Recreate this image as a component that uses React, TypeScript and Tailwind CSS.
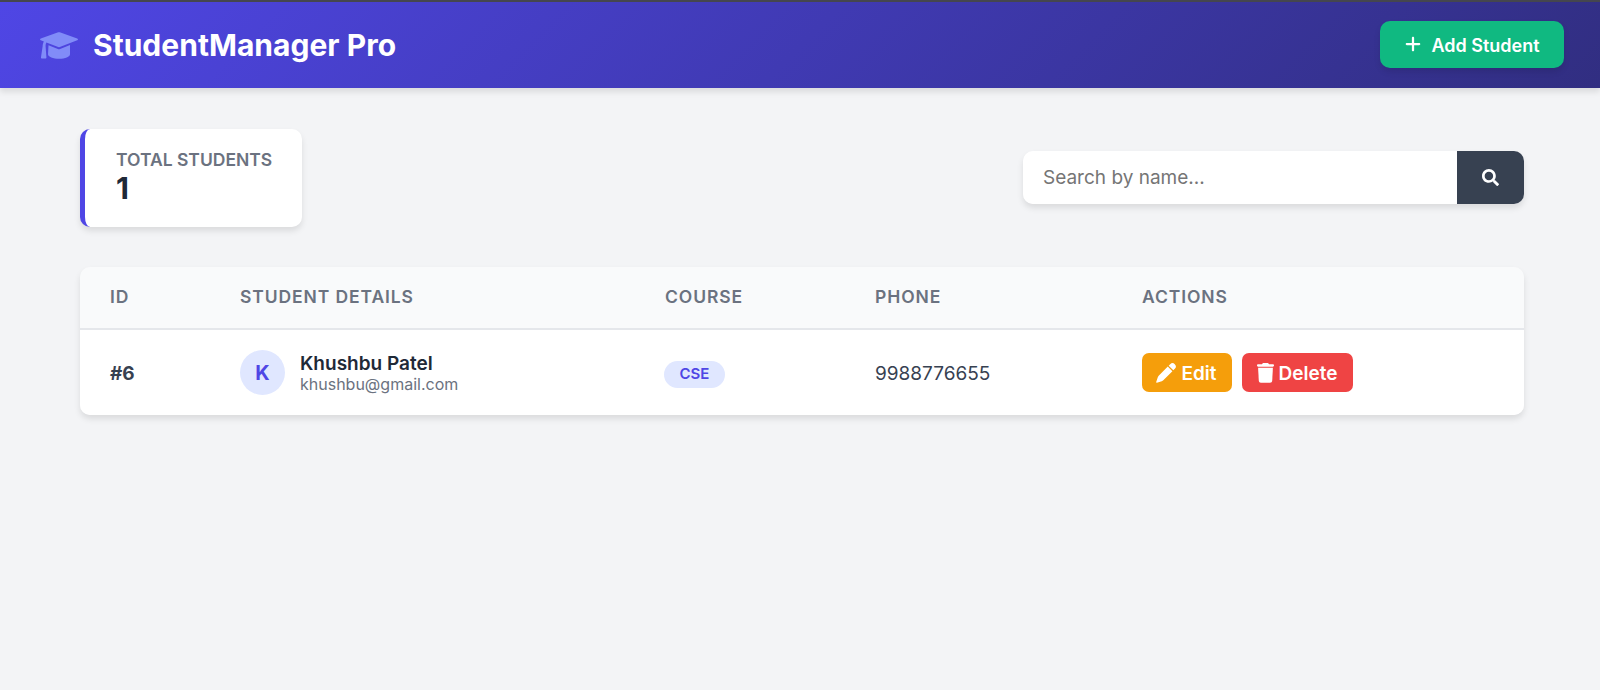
import { FaSearch } from 'react-icons/fa';
import { FaPlus } from 'react-icons/fa6';

interface Student {
  id: number;
  name: string;
  email: string;
  course: string;
  phone: string;
}

interface IconProps {
  className?: string;
}

const STUDENTS: Student[] = [
  { id: 6, name: 'Khushbu Patel', email: 'khushbu@gmail.com', course: 'CSE', phone: '9988776655' },
];

const GRID = 'grid grid-cols-[130px_425px_210px_267px_1fr] items-center px-[30px]';

function CapIcon({ className }: IconProps) {
  return (
    <svg viewBox="0 0 38 27" fill="currentColor" className={className}>
      <path d="M18.2.3a2.4 2.4 0 0 1 1.6 0l17.4 6.2c1 .4 1 1.4 0 1.8l-17.4 6.8a2.4 2.4 0 0 1-1.6 0L6.4 10.6c-.7 1-.9 2.3-.8 3.7l.8 11c.1.7-.3 1.2-1 1.2H2c-.7 0-1.1-.5-1-1.2l1.6-10.8c.1-2 .5-3.5 1.3-4.9L.8 8.3C-.2 7.9-.2 6.9.8 6.5Z" />
      <path d="m8.5 13.2 9.4 3.7c.7.3 1.5.3 2.2 0l9.9-3.8v9.2c0 2.6-4.8 4.5-10.8 4.5S8 24.9 8 22.3Z" />
    </svg>
  );
}

function PenIcon({ className }: IconProps) {
  return (
    <svg viewBox="0 0 20 20" fill="currentColor" className={className}>
      <path d="M14.2 1.2a3.2 3.2 0 0 1 4.6 4.6l-1.5 1.5-4.6-4.6Z" />
      <path d="m11.8 3.6 4.6 4.6-9.1 9.1a3.6 3.6 0 0 1-1.5.9L.9 19.8a.6.6 0 0 1-.7-.7l1.6-4.9c.2-.6.5-1.1.9-1.5Z" />
    </svg>
  );
}

function TrashIcon({ className }: IconProps) {
  return (
    <svg viewBox="0 0 17 20" fill="currentColor" className={className}>
      <path d="M5.3.7A1.2 1.2 0 0 1 6.4 0h4.2c.5 0 .9.3 1.1.7l.3.6h3.9c.6 0 1.1.5 1.1 1.2s-.5 1.2-1.1 1.2H1.1C.5 3.7 0 3.200 0 2.500S.5 1.300 1.100 1.300H5Z" />
      <path d="M1.100 4.700H15.900L15.200 17.800c-.1 1.200-.9 1.900-2 1.900H3.800c-1.100 0-1.900-.7-2-1.900Z" />
    </svg>
  );
}

function Header() {
  return (
    <header className="flex h-[88px] items-center justify-between border-t-2 border-[#45464f] bg-[linear-gradient(135deg,#4f46e5_0%,#312e81_100%)] pl-10 pr-9 shadow-[0_4px_6px_rgba(0,0,0,0.1)]">
      <div className="flex items-center gap-[15px]">
        <CapIcon className="h-[27px] w-[38px] text-[#818cf8]" />
        <h1 className="text-[30px] font-bold leading-9 tracking-[0.02px] text-white">StudentManager Pro</h1>
      </div>
      <button className="mb-px flex h-[47px] w-[184px] items-center justify-center gap-[9px] rounded-[10px] bg-[#10b981] pt-px text-[18px] font-semibold text-white shadow-[0_4px_6px_rgba(0,0,0,0.1)]">
        <FaPlus className="mb-[2px] size-[18px]" />
        Add Student
      </button>
    </header>
  );
}

function StatCard({ label, value }: { label: string; value: number }) {
  return (
    <div className="h-[98px] w-[222px] rounded-[10px] border-l-[5px] border-[#4f46e5] bg-white pl-[31px] pt-5 shadow-[0_4px_6px_rgba(0,0,0,0.1)]">
      <h3 className="text-[17.5px] font-semibold leading-[21px] text-[#6b7280]">{label}</h3>
      <p className="text-[30px] font-bold leading-9 text-[#1f2937]">{value}</p>
    </div>
  );
}

function SearchBox() {
  return (
    <form className="mb-px flex h-[53px] w-[501px] overflow-hidden rounded-[10px] shadow-[0_4px_6px_rgba(0,0,0,0.1)]">
      <input
        type="text"
        placeholder="Search by name..."
        className="min-w-0 flex-1 bg-white px-5 pt-[2px] text-[19px] text-[#374151] outline-none placeholder:text-[#757575]"
      />
      <button type="button" className="flex w-[67px] items-center justify-center bg-[#374151] text-white">
        <FaSearch className="size-[17px]" />
      </button>
    </form>
  );
}

function StudentRow({ student }: { student: Student }) {
  return (
    <div className={`${GRID} h-[85px] bg-white text-[19px] text-[#374151]`}>
      <span className="pt-[3px] font-bold">#{student.id}</span>
      <div className="flex items-center gap-[15px]">
        <div className="flex size-[45px] items-center justify-center rounded-full bg-[#e0e7ff] text-[20px] font-bold text-[#4f46e5]">
          {student.name.charAt(0)}
        </div>
        <div>
          <p className="text-[19px] font-semibold leading-[23px] text-[#1f2937]">{student.name}</p>
          <p className="text-[16px] leading-[19px] text-[#6b7280]">{student.email}</p>
        </div>
      </div>
      <div>
        <span className="-ml-px mt-[3px] flex h-[27px] w-[61px] items-center justify-center rounded-full bg-[#e0e7ff] pt-px text-[15px] font-semibold text-[#4f46e5]">
          {student.course}
        </span>
      </div>
      <span className="pt-[3px]">{student.phone}</span>
      <div className="flex gap-[10px] text-[19px] font-semibold text-white">
        <button className="flex h-[39px] w-[90px] items-center justify-center gap-[5px] rounded-[7px] bg-[#f59e0b] pr-px">
          <PenIcon className="size-5" />
          <span className="pt-[3px]">Edit</span>
        </button>
        <button className="flex h-[39px] w-[111px] items-center justify-center gap-[5px] rounded-[7px] bg-[#ef4444] pr-px">
          <TrashIcon className="h-5 w-[17px]" />
          <span className="pt-[3px]">Delete</span>
        </button>
      </div>
    </div>
  );
}

export default function App() {
  return (
    <div className="min-h-[690px] bg-[#f3f4f6] font-['Inter',sans-serif]">
      <Header />
      <main className="pl-20 pr-[76px] pt-[41px]">
        <section className="mb-10 flex items-center justify-between">
          <StatCard label="TOTAL STUDENTS" value={STUDENTS.length} />
          <SearchBox />
        </section>
        <section className="overflow-hidden rounded-[10px] shadow-[0_4px_6px_rgba(0,0,0,0.1)]">
          <div className={`${GRID} h-[63px] border-b-2 border-[#e5e7eb] bg-[#f9fafb] text-[17.5px] font-semibold tracking-[0.9px] text-[#6b7280]`}>
            <span>ID</span>
            <span>STUDENT DETAILS</span>
            <span>COURSE</span>
            <span>PHONE</span>
            <span>ACTIONS</span>
          </div>
          {STUDENTS.map((student) => (
            <StudentRow key={student.id} student={student} />
          ))}
        </section>
      </main>
    </div>
  );
}
